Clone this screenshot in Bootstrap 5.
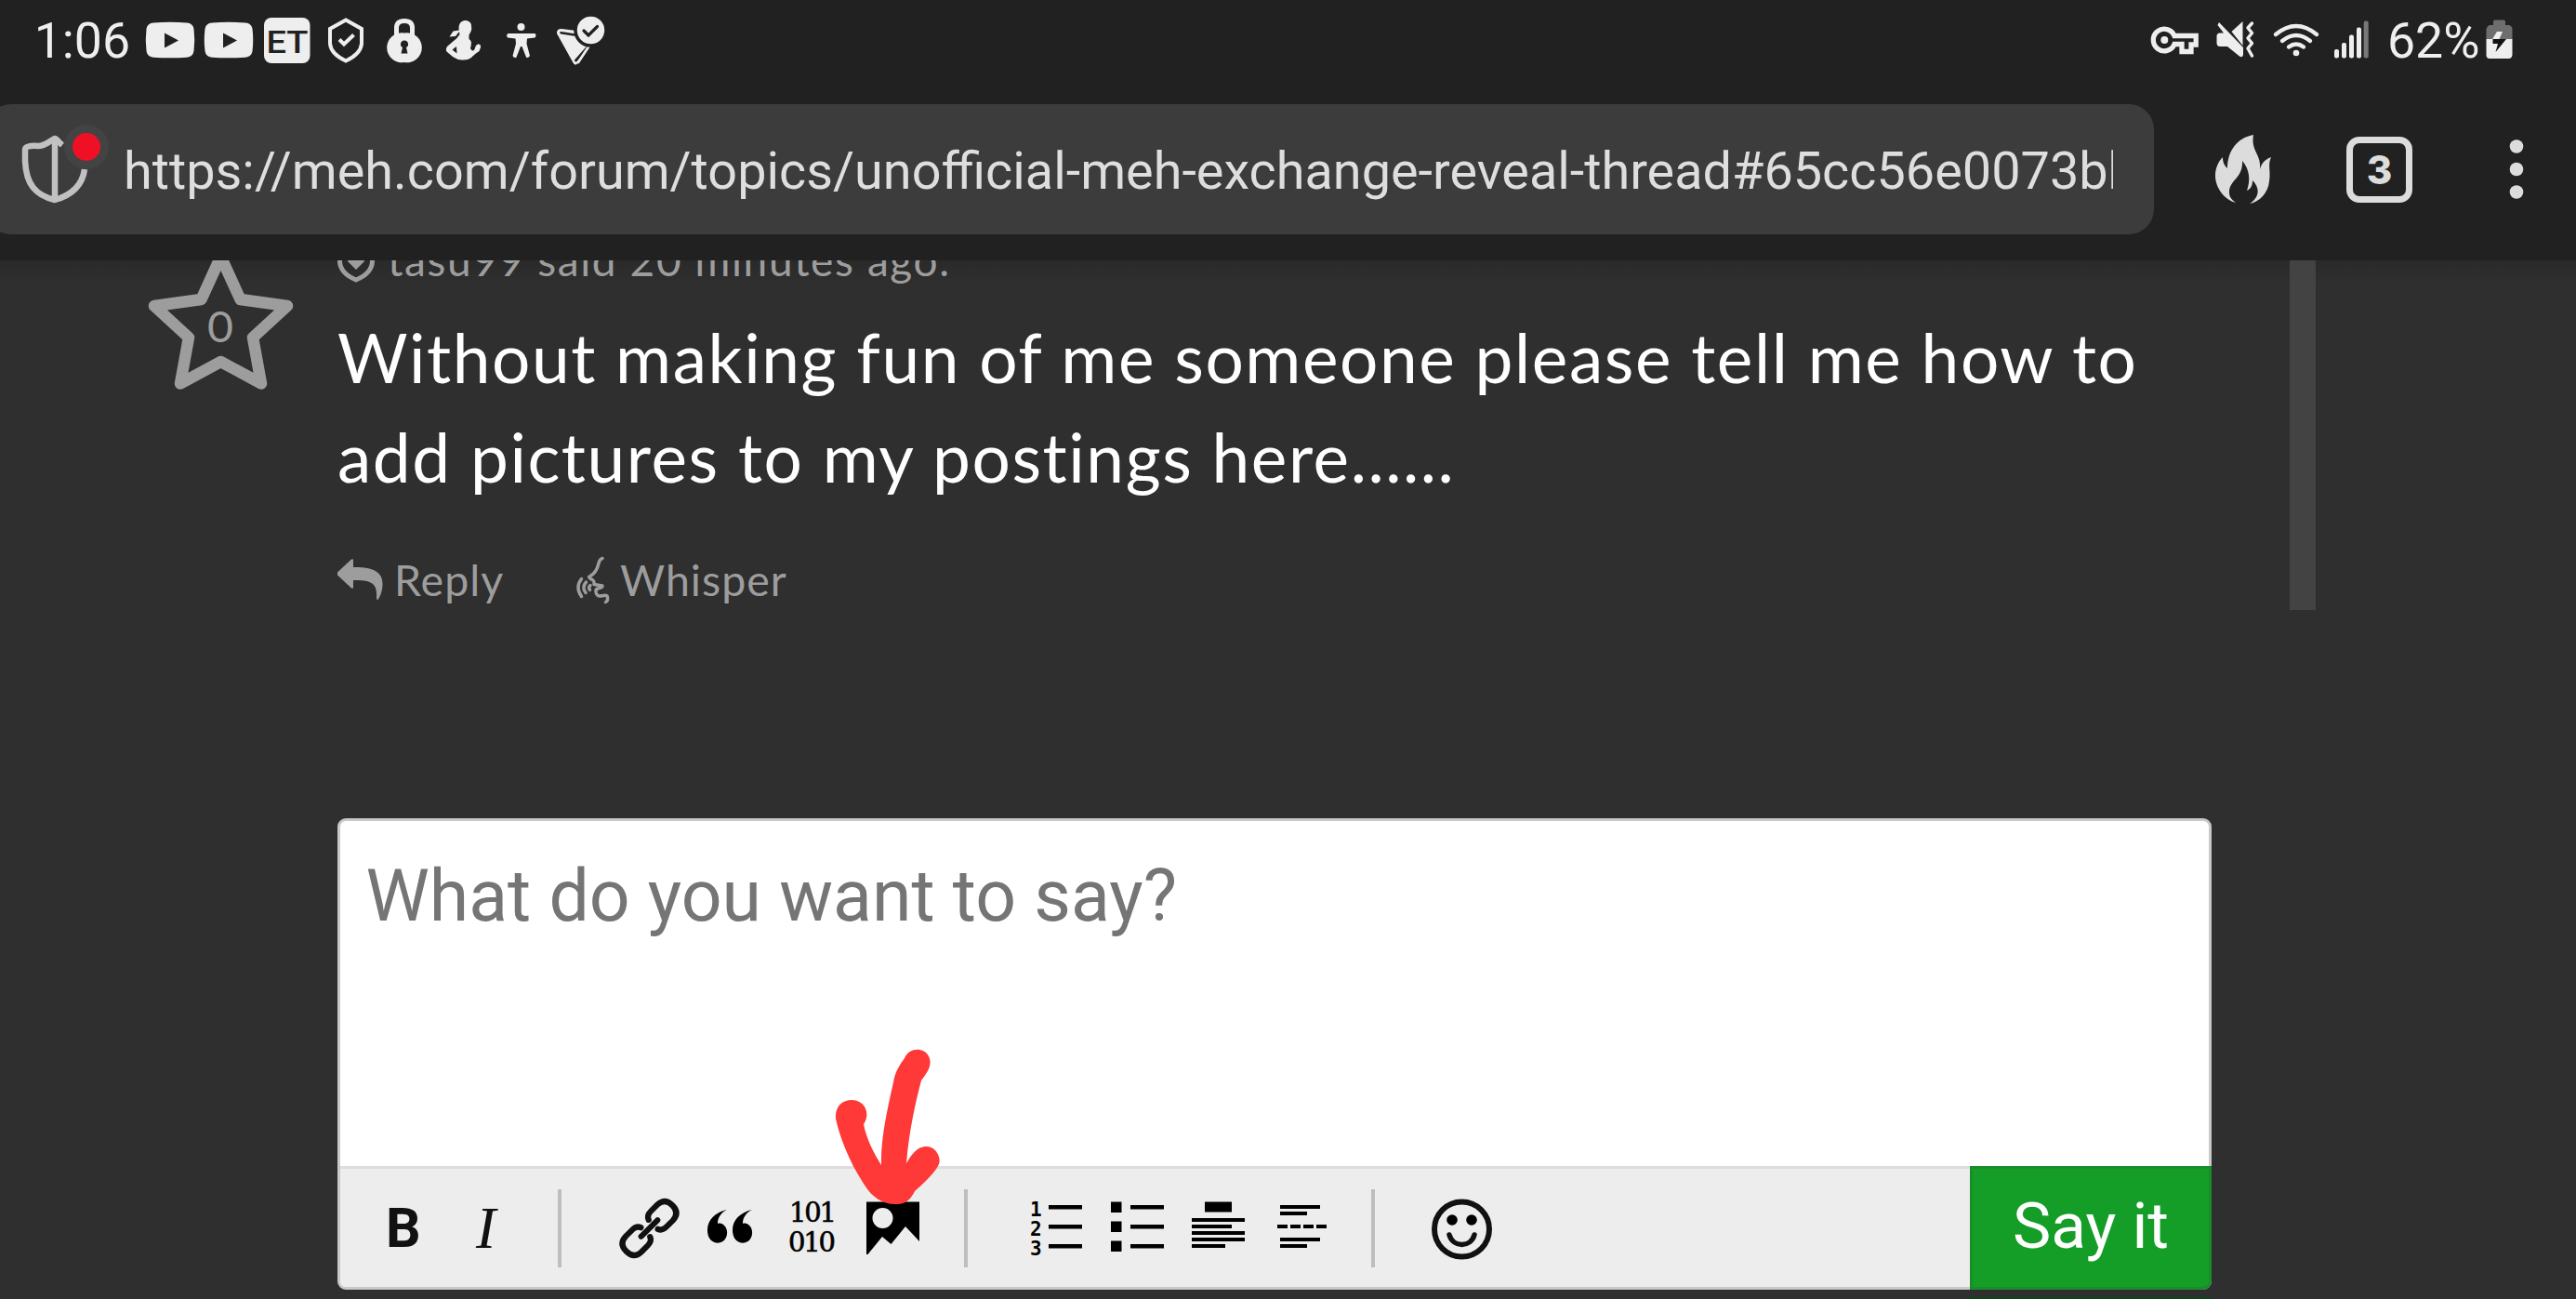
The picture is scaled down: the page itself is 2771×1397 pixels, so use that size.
<!DOCTYPE html>
<html lang="en">
<head>
  <meta charset="UTF-8">
  <meta name="viewport" content="width=device-width, initial-scale=1.0">
  <title>Unofficial meh exchange reveal thread</title>
  <link href="https://cdn.jsdelivr.net/npm/bootstrap@5.3.0/dist/css/bootstrap.min.css" rel="stylesheet">
  <style>
    body { background: #2f2f2f; font-family: Roboto, sans-serif; height: 1397px; }
    svg { display: block; flex: none; }
    .phone-top { background: #212121; height: 280px; }
    .status-bar { height: 88px; margin-bottom: 24px; color: #eee; font-size: 53.6px; line-height: 88px; fill: #eee; }
    .clock { width: 150px; padding-left: 36.7px; }
    .battery-text { width: 103px; padding-left: 3px; }
    .address-bar { width: 2332px; height: 140px; margin-left: -15px; padding-left: 15px; background: #3c3c3c; border-radius: 27px; }
    .address-url { width: 2140px; color: #dedede; font-size: 55.8px; line-height: 145px; }
    .tab-count { width: 71px; height: 71px; margin-left: 67px; border: 7px solid #dcdcdc; border-radius: 14px; color: #dcdcdc; font: 800 42px/57px Inter, sans-serif; }
    .thread { height: 376px; background: linear-gradient(#2a2a2a, #2f2f2f 26px); font-family: Lato, sans-serif; color: #9d9d9d; }
    .vote-col { width: 363px; padding-left: 140px; }
    .post-col { width: 2099.5px; }
    .scroll-strip { width: 28px; background: #434343; }
    .byline { height: 60px; margin-top: -30px; font-size: 46px; line-height: 60px; letter-spacing: 1.6px; }
    .message { width: 1985px; margin: 20.6px 0 48.9px; color: #fff; font-size: 73px; line-height: 107px; letter-spacing: 1.55px; }
    .post-actions { font-size: 46.5px; line-height: 60px; letter-spacing: 1px; }
    .reply-link { width: 253px; }
    .composer { width: 2016px; height: 507px; margin: 224px 0 0 363px; background: #fff; border: 3px solid #c9c9c9; border-radius: 9px; }
    .say-box { height: 371px; padding: 36px 27.5px; color: #757575; font-size: 77px; line-height: 90px; }
    .tool-row { height: 130px; background: #ededed; border-top: 3px solid #ddd; border-radius: 0 0 6px 6px; }
    .tool-sep { flex: none; width: 4px; height: 84px; background: #bebebe; }
    .tool-bold, .tool-italic { flex: none; color: #111; }
    .tool-bold { width: 110px; padding-left: 49px; font: 700 59px/60px Roboto, sans-serif; }
    .tool-italic { width: 124px; padding-left: 36px; font: italic 64px/60px "Liberation Serif", serif; }
    .say-btn { width: 260px; height: 133px; margin: -3px -3px -3px 0; padding: 0 0 4px; background: #149e27; border: 3px solid #1b8c2b; border-radius: 0 0 9px 0; color: #fff; font-size: 69.4px; line-height: 1; }
    .red-arrow { left: 524px; top: 207px; }
    .next-btn { width: 260px; height: 2px; margin: 8px 0 0 2119px; background: #0c4414; }
  </style>
</head>
<body class="overflow-hidden">
<header class="phone-top">
  <div class="status-bar d-flex">
    <div class="clock flex-shrink-0 text-nowrap">1:06</div>
    <!-- notification icons -->
    <svg width="63" height="88" viewBox="150 0 63 88"><path fill-rule="evenodd" d="M165 24.500Q183 23 201 24.500Q207.500 25 208.500 31Q210 43 208.500 55Q207.500 61 201 61.700Q183 63 165 61.700Q158.500 61 157.500 55Q156 43 157.500 31Q158.500 25 165 24.500ZM177 35.500V51.500L192 43.500Z"/></svg>
    <svg width="66" height="88" viewBox="213 0 66 88"><path fill-rule="evenodd" d="M228 24.500Q246 23 264 24.500Q270.500 25 271.500 31Q273 43 271.500 55Q270.500 61 264 61.700Q246 63 228 61.700Q221.500 61 220.500 55Q219 43 220.500 31Q221.500 25 228 24.500ZM240 35.500V51.500L255 43.500Z"/></svg>
    <svg width="64" height="88" viewBox="279 0 64 88"><rect x="284" y="19" width="49.500" height="49" rx="8"/><text x="286.500" y="56.500" font-size="34" font-weight="500" textLength="45" lengthAdjust="spacingAndGlyphs" fill="#212121">ET</text></svg>
    <svg width="66" height="88" viewBox="343 0 66 88"><path d="M372 21.500L389 31V47Q388 58 372 65.500Q356 58 355 47V31Z" fill="none" stroke="#eee" stroke-width="4"/><path d="M365 42.500L370 47.500L380.500 37.500" fill="none" stroke="#eee" stroke-width="4"/></svg>
    <svg width="64" height="88" viewBox="409 0 64 88"><path d="M426.500 42V30Q426.500 22.500 435 22.500T443.500 30V42" fill="none" stroke="#eee" stroke-width="5"/><path fill-rule="evenodd" d="M435 35.500A16 16 0 1 0 435 67A16 16 0 1 0 435 35.500ZM435 43.500A4 4 0 0 1 437 51L438.500 57.500H431.500L433 51A4 4 0 0 1 435 43.500Z"/></svg>
    <svg width="64" height="88" viewBox="473 0 64 88"><path d="M500 22C505 22 507.500 25 507 29C508 32 506 35 504.500 37.500V42C508 44 507 48 506 52C507 54 508 55 510 54L512 49L514 47.500Q517.500 47 517 51L515.500 55Q510 58.500 507 62Q503 65 497 64.500Q492 64.500 487 61L480.500 55.500Q479 53 481 50L491.500 41L494.500 37Q493.500 33 493.500 29Q494 23 500 22ZM491 50L486.500 53.500L491.500 57.500Z" fill-rule="evenodd"/><path d="M494 32.500L487.500 33.500L483.500 39.500L490 39L494 34Z"/></svg>
    <svg width="59" height="88" viewBox="537 0 59 88"><circle cx="560.500" cy="29" r="4"/><path d="M546.500 36H575.500Q577.500 38 575.500 40.500L567 41.500L566.500 47L570 60Q568 63 566 61.500L561.500 50H560L555.500 61.500Q553 63 551.500 60L555 47L554.500 41.500L546 40.500Q544 38 546.500 36Z"/></svg>
    <svg width="70" height="88" viewBox="596 0 70 88"><path d="M599 36Q598.500 31 604 31L620 33L632 49L622 67Q619 72 616.500 67.500Z"/><path d="M603.500 35.300L618 37.500" fill="none" stroke="#212121" stroke-width="2.600" stroke-linecap="round"/><path d="M631.500 51.500L619.500 65" fill="none" stroke="#212121" stroke-width="3" stroke-linecap="round"/><path d="M633 50.500L622 67" fill="none" stroke="#eee" stroke-width="2.800" stroke-linecap="round"/><circle cx="635.500" cy="32.500" r="16.500" stroke="#212121" stroke-width="3.500"/><path d="M628 33L633 38L642.500 28.500" fill="none" stroke="#212121" stroke-width="3.200" stroke-linecap="round"/></svg>
    <!-- system icons -->
    <svg class="ms-auto" width="66" height="88" viewBox="2308 0 66 88"><g fill="none" stroke="#eee" stroke-width="5.300"><path d="M2339 38.500A11.800 11.800 0 1 0 2339 47.500H2347V55.500H2357V48H2362.200V38.500Z"/></g><circle cx="2328.300" cy="43" r="4"/></svg>
    <svg width="64" height="88" viewBox="2374 0 64 88"><path d="M2412.500 23V49L2400.500 34Z"/><path d="M2387 24L2413 51V59Q2412 62.500 2409 60.500L2396 50H2388Q2384.500 50 2384.500 46V39Q2384.500 35.500 2388 35.500H2392L2385.500 27Z"/><path d="M2422.500 25L2418 30L2422.500 35.500L2418 41L2422.500 46.500L2418 52L2422.500 60" fill="none" stroke="#eee" stroke-width="3.500" stroke-linecap="round" stroke-linejoin="round"/></svg>
    <svg width="66" height="88" viewBox="2438 0 66 88"><g fill="none" stroke="#eee" stroke-width="4.400" stroke-linecap="round"><path d="M2448 37Q2470 19 2492 37M2455 44Q2470 32 2485 44M2462 50.500Q2470 44.500 2478 50.500"/></g><circle cx="2470" cy="57" r="3.300"/></svg>
    <svg width="61" height="88" viewBox="2504 0 61 88"><rect x="2511" y="53" width="5" height="9.500" rx="2"/><rect x="2519" y="46" width="5" height="16.500" rx="2"/><rect x="2527" y="37.500" width="5" height="25" rx="2"/><rect x="2535" y="29.500" width="5" height="33" rx="2"/><rect x="2542.700" y="22.500" width="5" height="40" rx="2" fill="#777"/></svg>
    <div class="battery-text flex-shrink-0 text-nowrap">62%</div>
    <svg width="103" height="88" viewBox="2668 0 103 88"><path d="M2682 27V22.500L2683.500 21.500H2693.500L2695 22.500V27H2699Q2702.500 28 2702.500 32V42H2674.500V32Q2675 28 2678 27Z" fill="#6e6e6e"/><path d="M2674.500 42H2702.500V59Q2702 63 2698.500 63H2678Q2674.500 63 2674.500 59Z"/><path d="M2686 34L2692 34L2688.500 42H2681Z"/><path d="M2681.500 42H2696L2684.500 56L2687 47H2681.500Z" fill="#111"/></svg>
  </div>
  <div class="d-flex align-items-center">
    <div class="address-bar d-flex flex-shrink-0">
      <!-- tracking protection shield -->
      <svg width="133" height="140" viewBox="0 112 133 140"><path d="M67 156C63 153 61 149 59 149C54 151 49 157 41 157Q27 156 27 161V173C28 198 38 210 59 215C80 209 89 197 91 182" fill="none" stroke="#c1c1c1" stroke-width="6.500"/><path d="M59 149V214" stroke="#c1c1c1" stroke-width="6.500"/><circle cx="93" cy="158" r="24" fill="#434343"/><circle cx="93" cy="158" r="15" fill="#f01025"/></svg>
      <div class="address-url overflow-hidden text-nowrap">https://meh.com/forum/topics/unofficial-meh-exchange-reveal-thread#65cc56e0073bb</div>
    </div>
    <svg width="140" height="140" viewBox="2317 112 140 140"><path fill="#dcdcdc" d="M2424 145C2421 163 2433 166 2431 182C2433 174 2438 171 2443 169C2439 178 2443 184 2441 195C2440 207 2431 217 2420 219C2431 212 2431 202 2423 194C2423 200 2421 203 2417 205C2421 194 2420 182 2412 173C2413 192 2398 193 2398 207C2398 212 2401 215 2405 218C2393 215 2383 202 2383 189C2383 181 2386 174 2391 169C2391 175 2393 178 2396 181C2396 162 2407 148 2424 145Z"/></svg>
    <div class="tab-count text-center">3</div>
    <svg class="ms-auto" width="110" height="140" viewBox="2661 112 110 140" fill="#dcdcdc"><circle cx="2707" cy="157.500" r="7.300"/><circle cx="2707" cy="182" r="7.300"/><circle cx="2707" cy="206.500" r="7.300"/></svg>
  </div>
</header>

<main class="overflow-hidden">
  <div class="thread d-flex overflow-hidden">
    <div class="vote-col">
      <svg width="223" height="160" viewBox="140 280 223 160"><path d="M237.500 276L258.500 322L309 329L272 363L281 412.500L237.500 389L194 412.500L203 363L166 329L216.500 322Z" fill="none" stroke="#9d9d9d" stroke-width="12.500" stroke-linejoin="round"/><text x="223" y="368" font-size="46" textLength="28" lengthAdjust="spacingAndGlyphs" fill="#9d9d9d">0</text></svg>
    </div>
    <div class="post-col">
      <div class="byline d-flex">
        <svg width="54" height="60" viewBox="363 250 54 60"><path d="M383 266L400.500 273V281Q400 294 383 301Q366 294 365.500 281V273Z" fill="none" stroke="#9d9d9d" stroke-width="5"/><path d="M374 281L383 290L392 281Q391 274 383 278Q375 274 374 281Z" fill="#9d9d9d"/></svg>
        <span>tasu99 said 20 minutes ago.</span>
      </div>
      <p class="message">Without making fun of me someone please tell me how to add pictures to my postings here......</p>
      <div class="post-actions d-flex">
        <div class="reply-link d-flex">
          <svg width="61" height="60" viewBox="363 593.500 61 60"><path fill="#9d9d9d" d="M363 616L378 602Q380 601 380 603V610.500C400 610 412 615 411.500 629C411.500 636 409 642 406.500 645.500Q405 646 405 643C406 629 401 624 380 624.500V632Q380 634 378 633L363 619Q361.500 617.500 363 616Z"/></svg>
          <span>Reply</span>
        </div>
        <div class="d-flex">
          <svg width="51" height="60" viewBox="616 593.500 51 60"><g fill="none" stroke="#9d9d9d" stroke-width="3.500" stroke-linecap="round" stroke-linejoin="round"><path d="M648 601C643 602 645 608 641 614Q639 618 633.500 621C635 625 640 622 639 629L648 630.500C648 634 642 632 641 635C641 638 641 641 645 641.500C650 641.500 653.500 639 653.500 643Q654 647 651.500 648"/><path d="M635 630Q632.500 632.500 634.500 635M630.500 626.500Q625.500 632 630 638M625.500 623Q618.500 632 625.500 642"/></g></svg>
          <span>Whisper</span>
        </div>
      </div>
    </div>
    <div class="scroll-strip"></div>
  </div>

  <form class="composer position-relative">
    <div class="say-box">What do you want to say?</div>
    <div class="tool-row d-flex align-items-center">
      <div class="d-flex align-items-center flex-grow-1">
        <div class="tool-bold">B</div>
        <div class="tool-italic">I</div>
        <div class="tool-sep"></div>
        <svg width="433" height="126" viewBox="604 1257 433 126">
          <!-- link -->
          <g transform="rotate(-45 698.500 1320) translate(698.500 1320) scale(.91 .88) translate(-698.500 -1320)" fill="none" stroke="#111" stroke-width="7" stroke-linecap="round"><path d="M692 1312Q690 1306.500 683 1306.500H672Q660 1307 660 1320T672 1333.500H683Q690 1333.500 692 1328"/><path d="M705 1312Q707 1306.500 714 1306.500H725Q737 1307 737 1320T725 1333.500H714Q707 1333.500 705 1328"/><path d="M685 1320H712"/></g>
          <!-- quote -->
          <path d="M782 1300C774 1304 772 1310 772 1315C777 1313 783 1319 782 1326C781 1339 761 1340 761 1322C761 1311 769 1303 782 1300ZM809 1300C801 1304 799 1310 799 1315C804 1313 810 1319 809 1326C808 1339 788 1340 788 1322C788 1311 796 1303 809 1300Z"/>
          <!-- code -->
          <g font-family="DejaVu Serif, serif" font-size="29" stroke="#000" stroke-width=".6"><text x="849" y="1313" textLength="51">101</text><text x="848" y="1344.500" textLength="51">010</text></g>
          <!-- picture -->
          <path fill-rule="evenodd" d="M932 1291.500H989V1334L974 1318L958.500 1337L949 1329L933.500 1348H932ZM949.500 1298A11 11 0 1 0 949.500 1320A11 11 0 1 0 949.500 1298Z"/>
        </svg>
        <div class="tool-sep"></div>
        <svg width="434" height="126" viewBox="1041 1257 434 126">
          <g font-family="DejaVu Sans Mono, monospace" font-weight="700" font-size="21"><text x="1108" y="1307">1</text><text x="1108" y="1328">2</text><text x="1108" y="1349">3</text></g>
          <path d="M1128 1295h36v4.500h-36zM1128 1316h36v4.500h-36zM1128 1337h36v4.500h-36z"/>
          <path d="M1195 1291.500h11.500v11.500h-11.500zM1195 1312.500h11.500v11.500h-11.500zM1195 1333.500h11.500v11.500h-11.500zM1216 1295h36v4.500h-36zM1216 1316h36v4.500h-36zM1216 1337h36v4.500h-36z"/>
          <path d="M1296 1291.500h29v11h-29zM1282 1309h57v4h-57zM1282 1316h43v4h-43zM1282 1323h57v4h-57zM1282 1330h57v4h-57zM1282 1337h36v4h-36z"/>
          <path d="M1377 1295h43v4h-43zM1377 1302h29v4h-29zM1374 1316h11v4h-11zM1388 1316h11v4h-11zM1402 1316h11v4h-11zM1416 1316h11v4h-11zM1377 1330h43v4h-43zM1377 1337h29v4h-29z"/>
        </svg>
        <div class="tool-sep"></div>
        <svg width="120" height="126" viewBox="1479 1257 120 126" overflow="visible"><circle cx="1572.500" cy="1321" r="29.500" fill="none" stroke="#111" stroke-width="6"/><circle cx="1562" cy="1311" r="5.800"/><circle cx="1583" cy="1311" r="5.800"/><path d="M1559 1327C1563 1341 1582 1341 1586 1327" fill="none" stroke="#111" stroke-width="5.500" stroke-linecap="round"/></svg>
      </div>
      <button type="button" class="say-btn btn flex-shrink-0 align-self-start">Say it</button>
    </div>
    <!-- hand-drawn arrow over the picture tool -->
    <svg class="red-arrow position-absolute" width="140" height="200" viewBox="890 1090 140 200" overflow="visible"><path fill="#ff3838" d="M973 1138C978 1126 994 1126 999 1136C1004 1146 996 1155 991 1162C985 1185 978 1215 975 1251C981 1241 986 1234 995 1233C1007 1232 1014 1246 1009 1254C1004 1263 993 1273 984 1281C980 1289 975 1295 965 1295C950 1296 938 1287 931 1276C915 1252 904 1226 899 1203C898 1190 906 1183 916 1183C930 1183 937 1197 929 1209C932 1225 940 1240 948 1253C947 1225 955 1191 961 1164C963 1152 968 1145 973 1138Z"/></svg>
  </form>
  <div class="next-btn"></div>
</main>
<script src="https://cdn.jsdelivr.net/npm/bootstrap@5.3.0/dist/js/bootstrap.bundle.min.js"></script>
</body>
</html>
